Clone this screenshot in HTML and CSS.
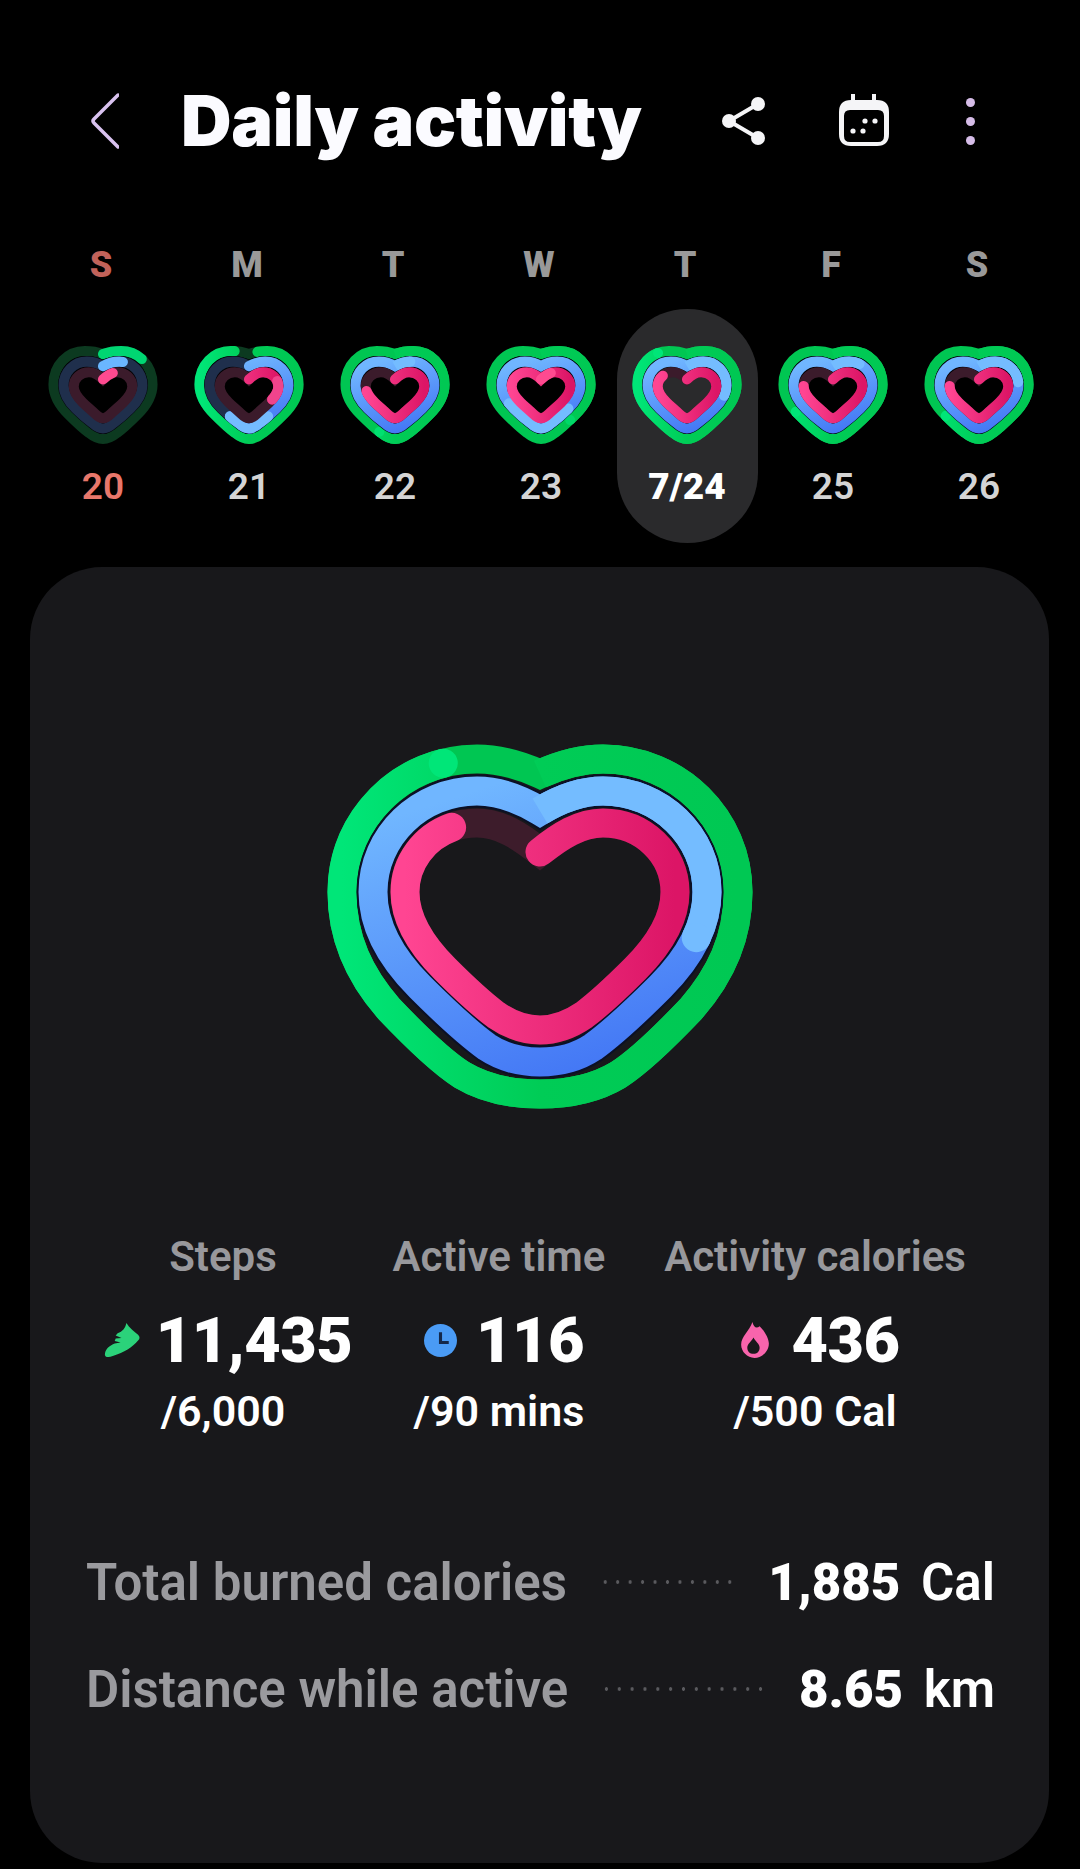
FILE: index.html
```html
<!DOCTYPE html>
<html lang="en">
  <head>
    <meta charset="UTF-8" />
    <meta name="viewport" content="width=device-width, initial-scale=1.0" />
    <title>Daily activity</title>
    <link rel="stylesheet" href="styles.css">
  </head>
  <body>
    <!-- shared ring paths, each one starts at the notch and runs clockwise -->
    <svg class="defs" width="0" height="0">
      <defs>
        <linearGradient id="green-arc">
          <stop offset="0" stop-color="#00e678" />
          <stop offset="0.5" stop-color="#00cc56" />
          <stop offset="1" stop-color="#00c853" />
        </linearGradient>
        <linearGradient id="blue-base" x1="0.3" y1="0" x2="0.7" y2="1">
          <stop offset="0" stop-color="#70b6ff" />
          <stop offset="1" stop-color="#4478f5" />
        </linearGradient>
        <linearGradient id="pink-arc">
          <stop offset="0" stop-color="#ff4592" />
          <stop offset="1" stop-color="#dc1566" />
        </linearGradient>
        <!-- big heart -->
        <path id="g" pathLength="100" d="M230 45 C250 36 270 30 293 30 C368 30 428 90 428 163 C428 210 410 247 381 280 C362 300 333 330 308 346 C283 361 255 365 230 365 C205 365 177 361 152 346 C127 330 98 300 79 280 C50 247 32 210 32 163 C32 90 92 30 167 30 C190 30 210 36 230 45 Z" />
        <path id="b" pathLength="100" d="M230 82 C250 70 270 62 293 62 C350 62 397 107 397 163 C397 200 376 232 350 258 C330 278 305 302 283 318 C265 330 248 333 230 333 C212 333 195 330 177 318 C155 302 130 278 110 258 C84 232 63 200 63 163 C63 107 110 62 167 62 C190 62 210 70 230 82 Z" />
        <path id="p" pathLength="100" d="M230 123 C250 107 270 94 293 94 C333 94 365 125 365 163 C365 192 346 219 325 240 C310 255 290 274 274 286 C258 297 245 301 230 301 C215 301 202 297 186 286 C170 274 150 255 135 240 C114 219 95 192 95 163 C95 125 127 94 167 94 C190 94 210 107 230 123 Z" />
        <!-- week strip hearts have thicker rings, so they get their own paths -->
        <path id="sg" pathLength="100" d="M54 8 C58 6.5 64 5 72 5 C89 5 103 19 103 38 C103 50 96 60 88 68 C82 74 75 81 68 86 C63 90 58 92 54 92 C50 92 45 90 40 86 C33 81 26 74 20 68 C12 60 5 50 5 38 C5 19 19 5 36 5 C44 5 50 6.5 54 8 Z" />
        <path id="sb" pathLength="100" d="M54 20 C59 17 64 15.5 70 15.5 C83 15.5 93 26 93 39 C93 48 88 55 81 62 C76 67 71 71.5 65 76 C61 79.5 58 81.7 54 81.7 C50 81.7 47 79.5 43 76 C37 71.5 32 67 27 62 C20 55 15 48 15 39 C15 26 25 15.5 38 15.5 C44 15.5 49 17 54 20 Z" />
        <path id="sp" pathLength="100" d="M54 33 C58 29 63 26 68 26 C76 26 83 32 83 40 C83 46 79 51 74 56 C70 60 66 63 62 67 C59 70 57 71.5 54 71.5 C51 71.5 49 70 46 67 C42 63 38 60 34 56 C29 51 25 46 25 40 C25 32 32 26 40 26 C45 26 50 29 54 33 Z" />
      </defs>
    </svg>

    <div class="top-bar">
      <svg class="icon-back" viewBox="0 0 28 56">
        <path d="M27 2 L3 26 Q1 28 3 30 L27 54" />
      </svg>
      <h1 class="title">Daily activity</h1>
      <svg class="icon-share" viewBox="0 0 44 50">
        <path d="M36 8 L7 25 L36 42" />
        <circle cx="36" cy="8" r="7" />
        <circle cx="7" cy="25" r="7" />
        <circle cx="36" cy="42" r="7" />
      </svg>
      <svg class="icon-calendar" viewBox="0 0 50 54">
        <path class="cal-body" fill-rule="evenodd" d="M12 6 H38 Q50 6 50 18 V40 Q50 52 38 52 H12 Q0 52 0 40 V18 Q0 6 12 6 Z M11 16 Q5 16 5 22 V42 Q5 48 11 48 H39 Q45 48 45 42 V22 Q45 16 39 16 Z" />
        <path class="cal-tabs" d="M14 0 V8 M35 0 V8" />
        <circle cx="26" cy="27" r="2.6" />
        <circle cx="36" cy="27" r="2.6" />
        <circle cx="14" cy="37" r="2.6" />
        <circle cx="24" cy="37" r="2.6" />
      </svg>
      <div class="icon-more">
        <span></span>
        <span></span>
        <span></span>
      </div>
    </div>

    <div class="week-labels">
      <span class="sun">S</span>
      <span>M</span>
      <span>T</span>
      <span>W</span>
      <span>T</span>
      <span>F</span>
      <span>S</span>
    </div>

    <div class="week-dates">
      <div class="date-col">
        <svg class="heart" viewBox="0 0 108 97">
          <use href="#sg" class="ring" stroke="#0c3a20" />
          <use href="#sg" class="ring arc" stroke="#00d672" stroke-dasharray="15 100" stroke-dashoffset="1" />
          <use href="#sb" class="gap" />
          <use href="#sb" class="ring" stroke="#1f2f4c" />
          <use href="#sb" class="ring arc" stroke="#6ab6ff" stroke-dasharray="10 100" stroke-dashoffset="1" />
          <use href="#sp" class="ring" stroke="#3b1b2b" />
          <use href="#sp" class="ring arc" stroke="#ff4a90" stroke-dasharray="7 100" />
        </svg>
        <span class="date sun">20</span>
      </div>
      <div class="date-col">
        <svg class="heart" viewBox="0 0 108 97">
          <use href="#sg" class="ring" stroke="#0c3a20" />
          <use href="#sg" class="ring arc" stroke="url(#green-arc)" stroke-dasharray="92 100" stroke-dashoffset="-3" />
          <use href="#sb" class="gap" />
          <use href="#sb" class="ring" stroke="#1f2f4c" />
          <use href="#sb" class="ring arc" stroke="url(#blue-base)" stroke-dasharray="60 100" />
          <use href="#sb" class="ring arc" stroke="#74bcff" stroke-dasharray="20 100" stroke-dashoffset="-40" />
          <use href="#sp" class="ring" stroke="#3b1b2b" />
          <use href="#sp" class="ring arc" stroke="url(#pink-arc)" stroke-dasharray="32 100" />
          <use href="#sp" class="ring arc" stroke="#f0448c" stroke-dasharray="12 100" stroke-dashoffset="-20" />
        </svg>
        <span class="date">21</span>
      </div>
      <div class="date-col">
        <svg class="heart" viewBox="0 0 108 97">
          <use href="#sg" class="ring" stroke="#00c652" />
          <use href="#sg" class="ring" stroke="url(#green-arc)" stroke-dasharray="56 100" />
          <use href="#sg" class="ring arc" stroke="#00e070" stroke-dasharray="0.01 100" stroke-dashoffset="-56" />
          <use href="#sb" class="gap" />
          <use href="#sb" class="ring" stroke="url(#blue-base)" />
          <use href="#sb" class="ring" stroke="#74bcff" stroke-dasharray="7 100" />
          <use href="#sb" class="ring arc" stroke="#74bcff" stroke-dasharray="0.01 100" stroke-dashoffset="-7" />
          <use href="#sp" class="ring" stroke="#3b1b2b" />
          <use href="#sp" class="ring arc" stroke="url(#pink-arc)" stroke-dasharray="74 100" />
        </svg>
        <span class="date">22</span>
      </div>
      <div class="date-col">
        <svg class="heart" viewBox="0 0 108 97">
          <use href="#sg" class="ring" stroke="#00c652" />
          <use href="#sg" class="ring" stroke="url(#green-arc)" stroke-dasharray="38 100" />
          <use href="#sg" class="ring arc" stroke="#00d968" stroke-dasharray="0.01 100" stroke-dashoffset="-38" />
          <use href="#sb" class="gap" />
          <use href="#sb" class="ring" stroke="url(#blue-base)" />
          <use href="#sb" class="ring arc" stroke="#74bcff" stroke-dasharray="33 100" stroke-dashoffset="-35" />
          <use href="#sp" class="ring" stroke="url(#pink-arc)" />
          <use href="#sp" class="ring arc" stroke="#ff4a90" stroke-dasharray="7 100" />
        </svg>
        <span class="date">23</span>
      </div>
      <div class="date-col active">
        <svg class="heart" viewBox="0 0 108 97">
          <use href="#sg" class="ring" stroke="#00c652" />
          <use href="#sg" class="ring" stroke="url(#green-arc)" stroke-dasharray="90 100" />
          <use href="#sg" class="ring arc" stroke="#00e678" stroke-dasharray="0.01 100" stroke-dashoffset="-90" />
          <use href="#sb" class="gap" />
          <use href="#sb" class="ring" stroke="url(#blue-base)" />
          <use href="#sb" class="ring" stroke="#74bcff" stroke-dasharray="28 100" />
          <use href="#sb" class="ring arc" stroke="#74bcff" stroke-dasharray="0.01 100" stroke-dashoffset="-28" />
          <use href="#sp" class="ring" stroke="#3b1b2b" />
          <use href="#sp" class="ring arc" stroke="url(#pink-arc)" stroke-dasharray="84 100" />
        </svg>
        <span class="date">7/24</span>
      </div>
      <div class="date-col">
        <svg class="heart" viewBox="0 0 108 97">
          <use href="#sg" class="ring" stroke="#00c652" />
          <use href="#sg" class="ring" stroke="url(#green-arc)" stroke-dasharray="66 100" />
          <use href="#sg" class="ring arc" stroke="#00e678" stroke-dasharray="0.01 100" stroke-dashoffset="-66" />
          <use href="#sb" class="gap" />
          <use href="#sb" class="ring" stroke="url(#blue-base)" />
          <use href="#sb" class="ring" stroke="#74bcff" stroke-dasharray="12 100" />
          <use href="#sb" class="ring arc" stroke="#74bcff" stroke-dasharray="0.01 100" stroke-dashoffset="-12" />
          <use href="#sp" class="ring" stroke="#3b1b2b" />
          <use href="#sp" class="ring arc" stroke="url(#pink-arc)" stroke-dasharray="77 100" />
        </svg>
        <span class="date">25</span>
      </div>
      <div class="date-col">
        <svg class="heart" viewBox="0 0 108 97">
          <use href="#sg" class="ring" stroke="#00c652" />
          <use href="#sg" class="ring" stroke="url(#green-arc)" stroke-dasharray="64 100" />
          <use href="#sg" class="ring arc" stroke="#00e678" stroke-dasharray="0.01 100" stroke-dashoffset="-64" />
          <use href="#sb" class="gap" />
          <use href="#sb" class="ring" stroke="url(#blue-base)" />
          <use href="#sb" class="ring" stroke="#74bcff" stroke-dasharray="22 100" />
          <use href="#sb" class="ring arc" stroke="#74bcff" stroke-dasharray="0.01 100" stroke-dashoffset="-22" />
          <use href="#sp" class="ring" stroke="#3b1b2b" />
          <use href="#sp" class="ring arc" stroke="url(#pink-arc)" stroke-dasharray="77 100" />
        </svg>
        <span class="date">26</span>
      </div>
    </div>

    <div class="card">
      <svg class="heart-big" viewBox="0 0 460 390">
        <use href="#g" class="ring-big" stroke="#00c652" />
        <use href="#g" class="ring-big" stroke="url(#green-arc)" stroke-dasharray="91.5 100" />
        <use href="#g" class="ring-big arc" stroke="#00e678" stroke-dasharray="0.01 100" stroke-dashoffset="-91.5" />
        <use href="#b" class="gap-big" />
        <use href="#b" class="ring-big" stroke="url(#blue-base)" />
        <use href="#b" class="ring-big" stroke="#74bcff" stroke-dasharray="28.5 100" />
        <use href="#b" class="ring-big arc" stroke="#74bcff" stroke-dasharray="0.01 100" stroke-dashoffset="-28.5" />
        <use href="#p" class="ring-big" stroke="#3d1c2b" />
        <use href="#p" class="ring-big arc" stroke="url(#pink-arc)" stroke-dasharray="87.5 100" />
      </svg>

      <div class="stats">
        <div class="stat">
          <div class="stat-label">Steps</div>
          <div class="stat-value value-steps">
            <svg class="icon-shoe" viewBox="9 10 38 37">
              <path d="M32 11 C35 16 40 20 44 23 C46 25 46 27 44 29 C38 36 30 41 18 45 C13 47 9 46 10 42 C11 37 15 34 20 32 L26 31 L20 29.5 L21 27 L27 26.5 L21 24 L23 21.5 C28 20 31 16 32 11 Z" />
            </svg>
            <span>11,435</span>
          </div>
          <div class="stat-goal">/6,000</div>
        </div>
        <div class="stat">
          <div class="stat-label">Active time</div>
          <div class="stat-value value-time">
            <svg class="icon-clock" viewBox="0 0 32 32">
              <circle cx="16" cy="16" r="16" />
              <path d="M16 8 V18 H24" />
            </svg>
            <span>116</span>
          </div>
          <div class="stat-goal">/90 mins</div>
        </div>
        <div class="stat">
          <div class="stat-label">Activity calories</div>
          <div class="stat-value">
            <svg class="icon-flame" viewBox="11 6 29 37">
              <path fill-rule="evenodd" d="M23 7 C24 12 27 14 30 11 C35 16 39 23 39 28 C39 36 32 42 25 42 C18 42 12 36 12 29 C12 21 20 16 23 7 Z M24 22 C22 26 18 28 18 32 C18 35.5 20.5 38 24 38 C27.5 38 30 35.5 30 32 C30 28 26 26 24 22 Z" />
            </svg>
            <span>436</span>
          </div>
          <div class="stat-goal">/500 Cal</div>
        </div>
      </div>

      <div class="total-row">
        <span class="total-label">Total burned calories</span>
        <span class="dots"></span>
        <span class="total-value"><b>1,885</b> <span>Cal</span></span>
      </div>
      <div class="total-row total-row-last">
        <span class="total-label">Distance while active</span>
        <span class="dots"></span>
        <span class="total-value"><b>8.65</b> <span>km</span></span>
      </div>
    </div>
  </body>
</html>
```

FILE: styles.css
```css
* {
  margin: 0;
  padding: 0;
  box-sizing: border-box;
}
body {
  width: 1080px;
  height: 1869px;
  overflow: hidden;
  background: #000;
  color: #fff;
  font-family: Roboto, "Liberation Sans", sans-serif;
}
.defs {
  display: block;
  height: 0;
}

/* header */
.top-bar {
  display: flex;
  align-items: center;
  height: 62px;
  margin-top: 90px;
  padding-left: 91px;
}
.icon-back {
  width: 28px;
  height: 56px;
  margin-right: 62px;
  fill: none;
  stroke: #d9c2ef;
  stroke-width: 3.5;
  stroke-linecap: round;
}
.title {
  width: 541px;
  font-family: Inter, Roboto, sans-serif;
  font-size: 70px;
  font-weight: 900;
  line-height: 62px;
  letter-spacing: -0.3px;
  white-space: nowrap;
  color: #fbfbff;
}
.icon-share {
  width: 44px;
  height: 50px;
  margin-right: 73px;
  fill: #f5f5f7;
  stroke: none;
}
.icon-share path {
  fill: none;
  stroke: #f5f5f7;
  stroke-width: 4;
}
.icon-calendar {
  width: 50px;
  height: 54px;
  margin-right: 77px;
  fill: #f5f5f7;
}
.cal-tabs {
  fill: none;
  stroke: #f5f5f7;
  stroke-width: 4;
}
.icon-more {
  display: flex;
  flex-direction: column;
  gap: 10px;
}
.icon-more span {
  width: 9px;
  height: 9px;
  border-radius: 50%;
  background: #d6bde8;
}

/* week strip */
.week-labels {
  display: grid;
  grid-template-columns: repeat(7, 146px);
  margin: 94px 0 0 28px;
  font-size: 36px;
  font-weight: 900;
  line-height: 38px;
  text-align: center;
  color: #999;
}
.week-labels .sun {
  color: #c1625a;
}
.week-dates {
  display: grid;
  grid-template-columns: repeat(7, 146px);
  margin: 25px 0 0 30px;
}
.date-col {
  display: flex;
  flex-direction: column;
  align-items: center;
  justify-self: center;
  width: 141px;
  height: 234px;
  padding-top: 37px;
  border-radius: 71px;
}
.date-col.active {
  background: #2a2a2c;
}
.heart {
  display: block;
  flex: none;
  width: 110px;
  height: 98px;
}
.date {
  margin-top: 21px;
  font-size: 37px;
  font-weight: 600;
  line-height: 44px;
  color: #d4d4d4;
}
.date.sun {
  color: #e8776b;
}
.active .date {
  font-weight: 900;
  color: #fff;
}

/* rings */
.ring,
.ring-big {
  fill: none;
  stroke-width: 10;
}
.ring-big {
  stroke-width: 29;
}
.arc {
  stroke-linecap: round;
}
.gap,
.gap-big {
  fill: none;
  stroke: #05060c;
  stroke-width: 11;
}
.gap-big {
  stroke: #0b1026;
  stroke-width: 33;
}

/* card */
.card {
  width: 1019px;
  height: 1296px;
  margin: 24px 0 0 30px;
  border-radius: 72px;
  background: #18181b;
  overflow: hidden;
}
.heart-big {
  display: block;
  width: 460px;
  height: 390px;
  margin: 162px 0 0 280px;
}
.stats {
  display: grid;
  grid-template-columns: 276px 276px 356px;
  margin-top: 116px;
  padding-left: 55px;
}
.stat {
  text-align: center;
}
.stat-label {
  font-size: 42px;
  font-weight: 600;
  line-height: 44px;
  white-space: nowrap;
  color: #98989c;
}
.stat-value {
  display: flex;
  align-items: center;
  justify-content: center;
  gap: 21px;
  height: 72px;
  margin-top: 25px;
  padding-left: 10px;
  font-size: 63px;
  font-weight: 900;
  letter-spacing: -0.5px;
  white-space: nowrap;
}
.value-steps {
  gap: 15px;
}
.value-time {
  gap: 19px;
}
.stat-goal {
  margin-top: 12px;
  font-size: 43px;
  font-weight: 600;
  line-height: 46px;
}
.icon-shoe {
  width: 37px;
  height: 36px;
  fill: #2bd27a;
}
.icon-clock {
  width: 33px;
  height: 33px;
  fill: #4a9bf5;
}
.icon-clock path {
  fill: none;
  stroke: #14284a;
  stroke-width: 3;
}
.icon-flame {
  width: 30px;
  height: 38px;
  fill: #f864ac;
}

/* totals */
.total-row {
  display: flex;
  align-items: center;
  height: 60px;
  margin-top: 118px;
  padding: 0 54px 0 56px;
  white-space: nowrap;
}
.total-row-last {
  margin-top: 47px;
}
.total-label {
  font-size: 51px;
  font-weight: 600;
  color: #9a9a9e;
}
.dots {
  flex: 1;
  height: 6px;
  margin: 0 32px;
  background-image: radial-gradient(circle, #5a5a5e 1.5px, transparent 2px);
  background-size: 12.6px 6px;
  background-repeat: round no-repeat;
}
.total-value {
  font-size: 51px;
  font-weight: 600;
}
.total-value b {
  margin-right: 8px;
  font-weight: 900;
}
```
